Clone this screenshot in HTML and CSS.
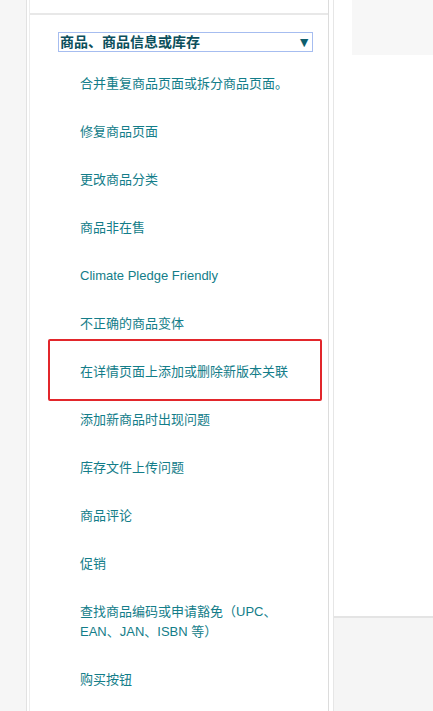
FILE: index.html
```html
<!DOCTYPE html>
<html lang="zh-CN">
<head>
    <meta charset="UTF-8">
    <meta name="viewport" content="width=device-width, initial-scale=1.0">
    <title>联系卖家支持</title>
    <link rel="stylesheet" href="styles.css">
</head>
<body>
    <div class="page">
        <div class="gutter"></div>
        <div class="sidebar">
            <div class="panel">
                <div class="panel-top"></div>
                <div class="select-row">
                    <div class="select">
                        <span class="select-label">商品、商品信息或库存</span>
                        <span class="select-arrow">▼</span>
                    </div>
                </div>
                <ul class="topics">
                    <li><a href="#">合并重复商品页面或拆分商品页面。</a></li>
                    <li><a href="#">修复商品页面</a></li>
                    <li><a href="#">更改商品分类</a></li>
                    <li><a href="#">商品非在售</a></li>
                    <li><a href="#">Climate Pledge Friendly</a></li>
                    <li><a href="#">不正确的商品变体</a></li>
                    <li class="marked"><a href="#">在详情页面上添加或删除新版本关联</a><span class="mark"></span></li>
                    <li><a href="#">添加新商品时出现问题</a></li>
                    <li><a href="#">库存文件上传问题</a></li>
                    <li><a href="#">商品评论</a></li>
                    <li><a href="#">促销</a></li>
                    <li><a href="#">查找商品编码或申请豁免（UPC、EAN、JAN、ISBN 等）</a></li>
                    <li><a href="#">购买按钮</a></li>
                </ul>
            </div>
        </div>
        <div class="aside">
            <div class="aside-top">
                <div class="aside-card"></div>
            </div>
            <div class="aside-bottom"></div>
        </div>
    </div>
</body>
</html>
```

FILE: styles.css
```css
body {
    margin: 0;
    background: #f6f6f6;
    font-family: "Liberation Sans", Arial, "Noto Sans CJK SC", sans-serif;
    overflow: hidden;
}
.page {
    display: flex;
    height: 711px;
}
.gutter {
    width: 26px;
    background: #f6f6f6;
}
.sidebar {
    border-left: 1px solid #e2e2e2;
    border-right: 1px solid #e6e6e6;
    padding: 0 4px 0 2px;
    background: #fff;
    display: flex;
}
.panel {
    width: 298px;
    border-left: 1px solid #ededed;
    border-right: 1px solid #dcdcdc;
    background: #fff;
}
.panel-top {
    height: 13px;
    border-bottom: 2px solid #e8e8e8;
}
.select-row {
    padding: 17px 0 0 28px;
}
.select {
    width: 253px;
    height: 18px;
    border: 1px solid #a6bdf0;
    display: flex;
    align-items: center;
    justify-content: space-between;
    color: #0b4f5c;
}
.select-label {
    font-size: 14px;
    font-weight: bold;
    line-height: 18px;
    padding-left: 1px;
}
.select-arrow {
    font-size: 14px;
    line-height: 18px;
    color: #0e5f6d;
    padding-right: 1px;
}
.topics {
    list-style: none;
    margin: 8px 0 0;
    padding: 0;
}
.topics li {
    position: relative;
    padding: 14px 0 14px 50px;
    line-height: 20px;
    font-size: 13px;
}
.topics a {
    display: inline-block;
    max-width: 212px;
    color: #137d89;
    text-decoration: none;
}
.mark {
    position: absolute;
    left: 18px;
    right: 6px;
    top: -9px;
    bottom: -5px;
    border: 2px solid #e2262b;
    border-radius: 2px;
}
.aside {
    flex: 1;
    display: flex;
    flex-direction: column;
}
.aside-top {
    height: 616px;
    background: #fff;
    padding-left: 18px;
    border-bottom: 2px solid #e4e4e4;
}
.aside-card {
    height: 55px;
    background: #f7f7f7;
}
.aside-bottom {
    flex: 1;
    background: #f5f5f5;
}
```
